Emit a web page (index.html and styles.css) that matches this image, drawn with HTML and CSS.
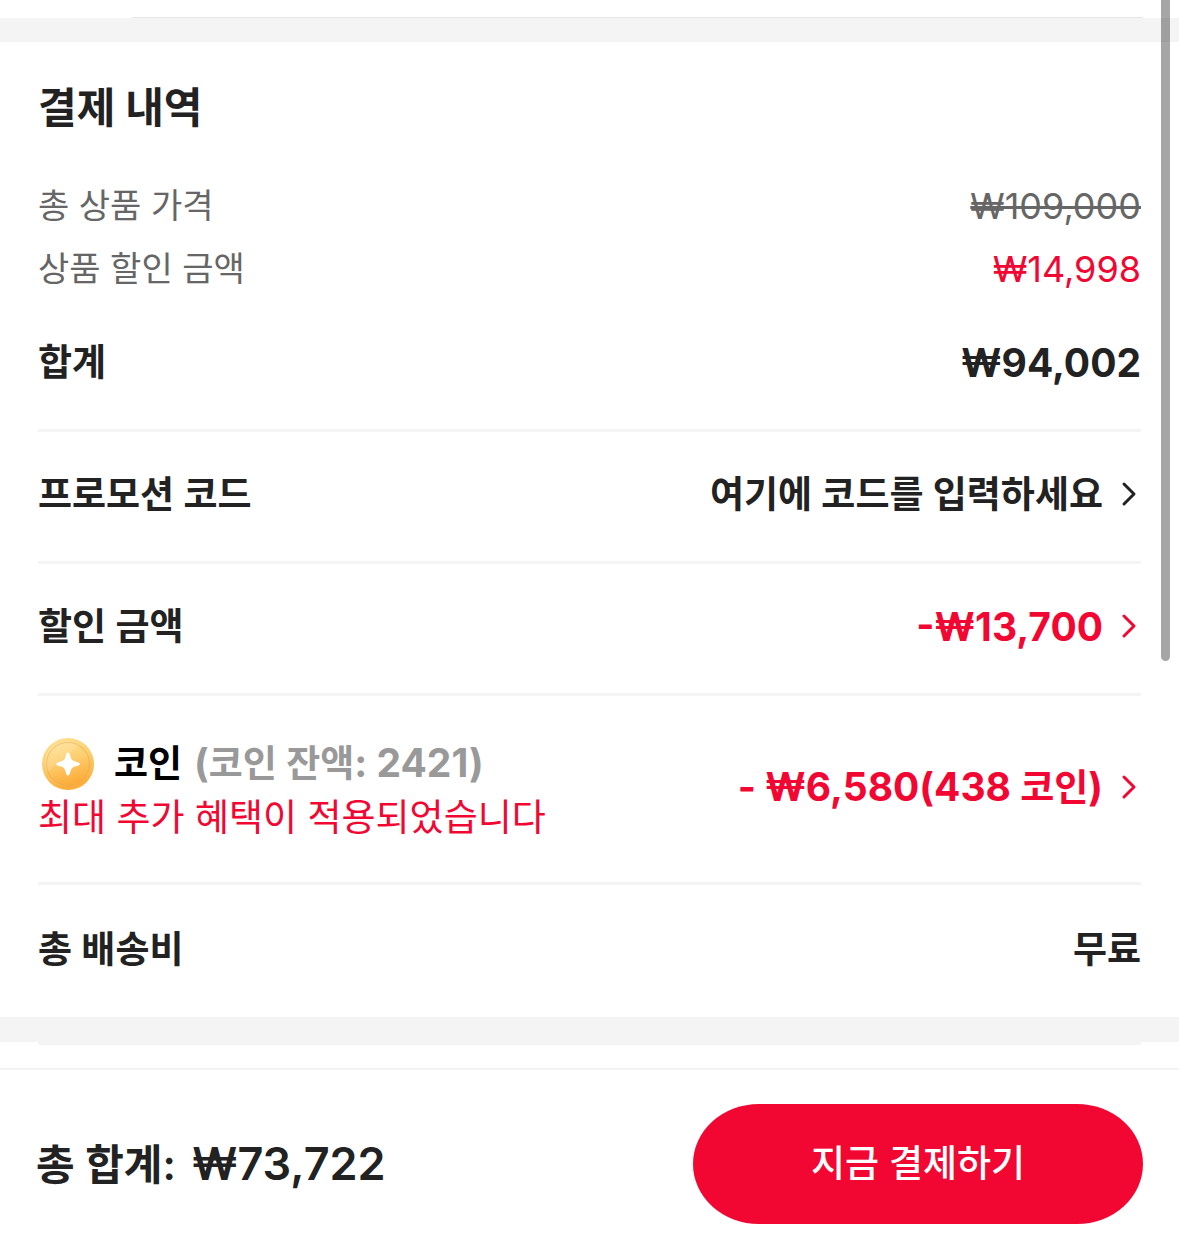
FILE: index.html
```html
<!DOCTYPE html>
<html lang="ko">
<head>
    <meta charset="UTF-8">
    <meta name="viewport" content="width=device-width, initial-scale=1">
    <title>결제 내역</title>
    <link rel="stylesheet" href="styles.css">
</head>
<body>
    <div class="scrollbar"></div>
    <main>
        <div class="previous"></div>
        <div class="band"></div>

        <section class="payment">
            <h2>결제 내역</h2>
            <div class="price-row">
                <span>총 상품 가격</span>
                <del class="price">₩109,000</del>
            </div>
            <div class="price-row">
                <span>상품 할인 금액</span>
                <span class="price red">₩14,998</span>
            </div>
            <div class="row">
                <span>합계</span>
                <span class="amount">₩94,002</span>
            </div>
            <div class="row">
                <span>프로모션 코드</span>
                <button type="button" class="link">
                    <span>여기에 코드를 입력하세요</span>
                    <svg class="chevron" viewBox="0 0 18 30"><path d="M3 4l10 10L3 24"/></svg>
                </button>
            </div>
            <div class="row">
                <span>할인 금액</span>
                <button type="button" class="link red">
                    <span class="amount">-₩13,700</span>
                    <svg class="chevron" viewBox="0 0 18 30"><path d="M3 4l10 10L3 24"/></svg>
                </button>
            </div>
            <div class="row coins">
                <div>
                    <div class="coin-title">
                        <svg class="coin" viewBox="0 0 60 60">
                            <defs>
                                <linearGradient id="gold" x1="0" y1="0" x2="0.3" y2="1">
                                    <stop offset="0" stop-color="#fde293"/>
                                    <stop offset="0.5" stop-color="#fdce70"/>
                                    <stop offset="1" stop-color="#fcae3c"/>
                                </linearGradient>
                            </defs>
                            <circle cx="30" cy="30" r="26" fill="url(#gold)"/>
                            <circle cx="30" cy="30" r="21.5" fill="url(#gold)" stroke="#e5ab4f" stroke-width="0.7"/>
                            <path d="M9 38L41 11A21.5 21.5 0 0 0 9 38z" fill="#fff" opacity="0.13"/>
                            <path d="M30 18.500c1.200 0 1.700 1 2.200 3 1.200 4.500 2 5.300 6.500 6.400 2 .5 3 1 3 2s-1 1.600-3 2.100c-4.500 1.100-5.300 2-6.500 6.500-.5 2-1 3-2.200 3s-1.700-1-2.200-3c-1.200-4.500-2-5.400-6.500-6.500-2-.5-3-1.100-3-2.100s1-1.500 3-2c4.500-1.100 5.300-1.900 6.500-6.400.5-2 1-3 2.200-3z" fill="#fff"/>
                        </svg>
                        <span class="coin-name">코인</span>
                        <span class="balance"><span class="amount">(</span>코인 잔액<span class="amount">: 2421)</span></span>
                    </div>
                    <p class="notice">최대 추가 혜택이 적용되었습니다</p>
                </div>
                <button type="button" class="link red">
                    <span><span class="amount">- ₩6,580(438 </span>코인<span class="amount">)</span></span>
                    <svg class="chevron" viewBox="0 0 18 30"><path d="M3 4l10 10L3 24"/></svg>
                </button>
            </div>
            <div class="row">
                <span>총 배송비</span>
                <span>무료</span>
            </div>
        </section>

        <div class="band last"></div>
        <div class="next"></div>
    </main>

    <footer class="checkout">
        <div class="total"><span>총 합계:</span><span class="total-amount">₩73,722</span></div>
        <button type="submit" class="pay">지금 결제하기</button>
    </footer>
</body>
</html>
```

FILE: styles.css
```css
* { box-sizing: border-box; }
body { margin: 0; background: #fff; color: #222; font-family: Inter, "Noto Sans CJK KR", sans-serif; font-size: 37px; line-height: 54px; position: relative; }
h2, p { margin: 0; }
button { font: inherit; color: inherit; background: none; border: none; padding: 0; cursor: pointer; }

.scrollbar { position: absolute; top: 0; right: 9px; width: 9px; height: 661px; background: rgba(0, 0, 0, 0.35); border-radius: 0 0 5px 5px; }

/* end of the block above */
.previous { height: 18px; margin: 0 36px 0 132px; border-bottom: 1px solid #e6e6e6; }
.band { height: 24px; background: #f4f4f4; }
.band.last { height: 25px; }
.next { height: 26px; margin: 0 38px; border-top: 3px solid #f4f4f4; }

.payment { padding: 36px 38px 0; }
h2 { font-size: 42px; line-height: 60px; font-weight: 700; margin-bottom: 36px; }
.price-row { display: flex; justify-content: space-between; align-items: center; height: 63px; font-size: 34px; color: #666; }
.price { font-size: 36px; }
.row { display: flex; justify-content: space-between; align-items: center; height: 132px; padding-bottom: 3px; font-weight: 600; border-bottom: 3px solid #f4f4f4; }
.row:last-child { border-bottom: none; }
.amount { font-size: 39px; font-weight: 700; }
.red, .price-row .red { color: #f10732; }

.link { display: flex; align-items: center; gap: 16px; }
.chevron { width: 22px; height: 30px; fill: none; stroke: currentColor; stroke-width: 3; stroke-linecap: round; stroke-linejoin: round; }

.coins { height: 189px; }
.coin-title { display: flex; align-items: center; }
.coin { width: 60px; height: 60px; margin-right: 16px; }
.coin-name { color: #000; margin-right: 12px; }
.balance { color: #999; }
.notice { color: #f10732; font-weight: 400; line-height: 48px; }

.checkout { display: flex; justify-content: space-between; align-items: center; padding: 34px 36px 36px; border-top: 2px solid #f4f4f4; }
.total { display: flex; align-items: baseline; gap: 16px; font-size: 42px; font-weight: 600; }
.total-amount { font-size: 45px; }
.pay { width: 450px; height: 120px; background: #f10732; color: #fff; font-weight: 500; border-radius: 66px / 60px; }
```
